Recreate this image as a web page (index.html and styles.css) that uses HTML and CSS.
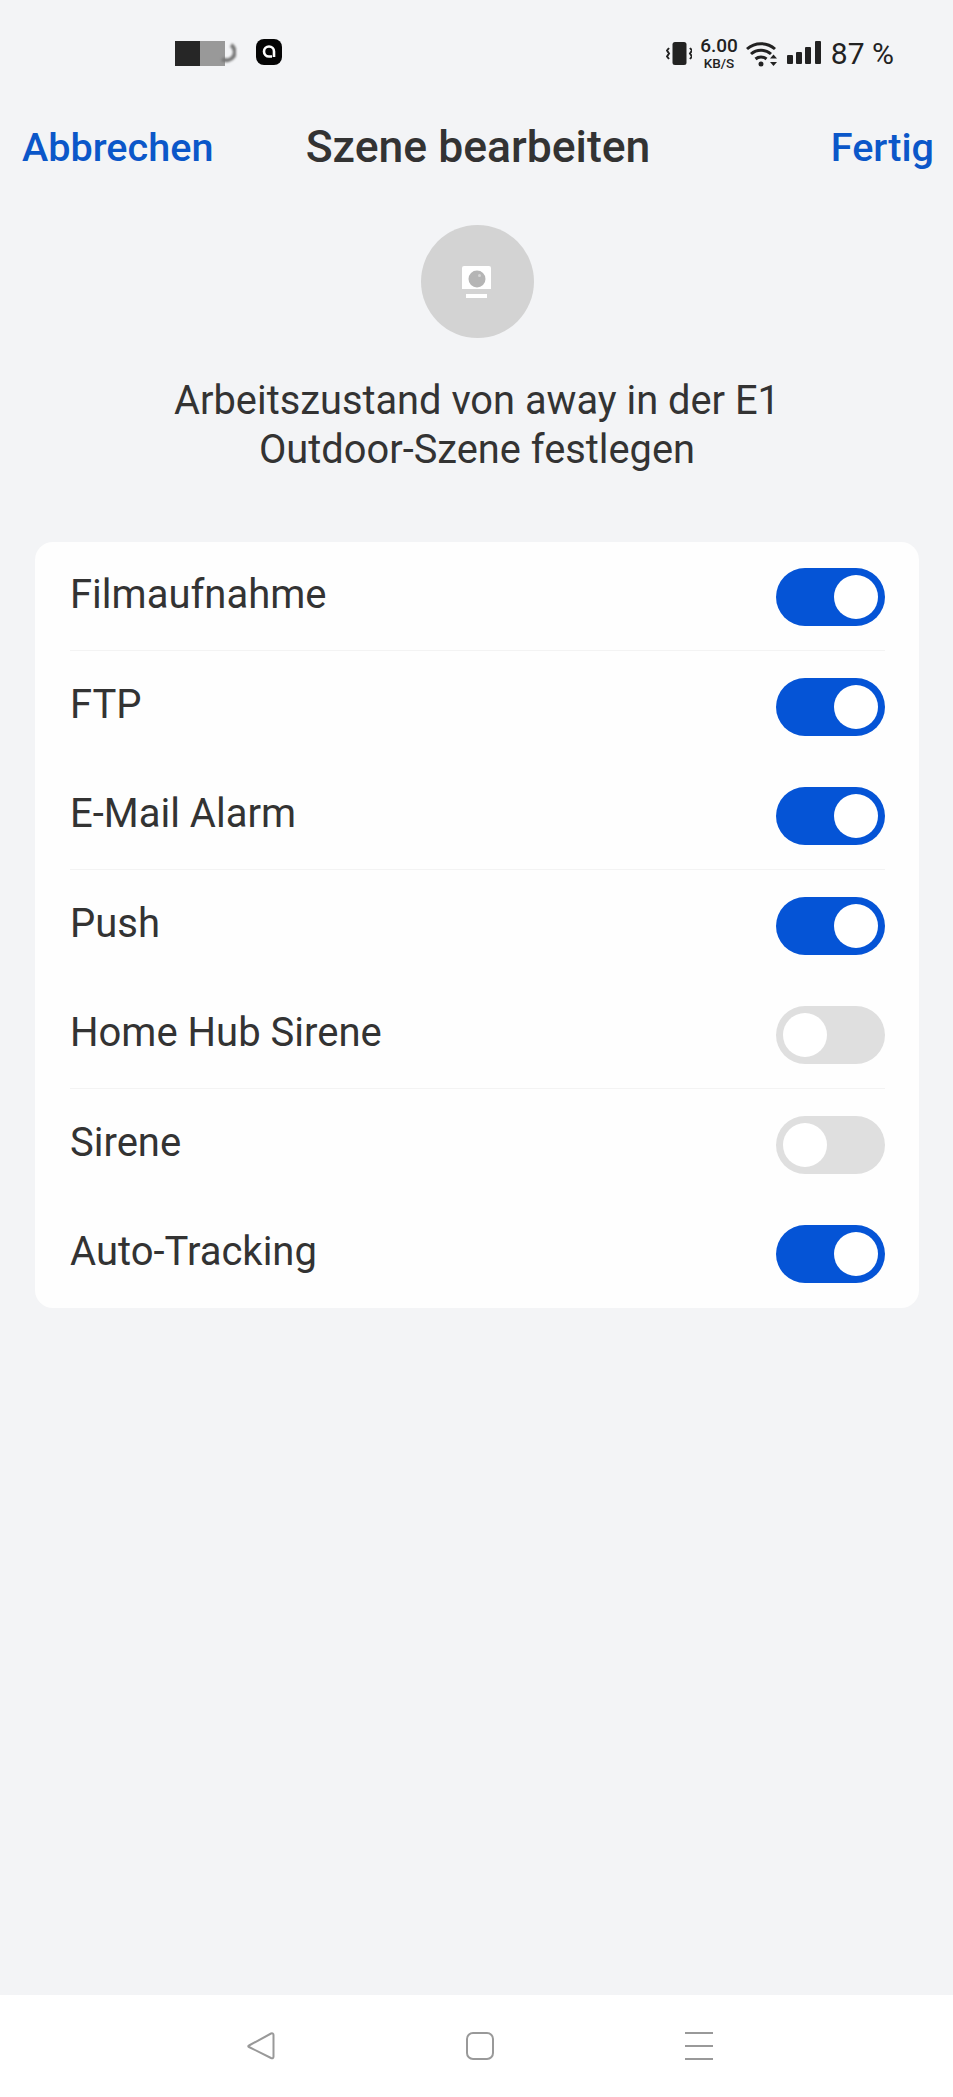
FILE: index.html
```html
<!DOCTYPE html>
<html lang="de">
<head>
    <meta charset="UTF-8">
    <meta name="viewport" content="width=device-width, initial-scale=1.0">
    <title>Szene bearbeiten</title>
    <link rel="stylesheet" href="styles.css">
</head>
<body>
    <div class="statusbar">
        <div class="status-left">
            <span class="blur-dark"></span>
            <span class="blur-grey"></span>
            <svg class="blur-ring" width="18" height="22" viewBox="0 0 18 22">
                <path d="M13 2a7.500 7.500 0 0 1-9 14" fill="none" stroke="#777" stroke-width="4"/>
            </svg>
            <svg class="app-icon" width="26" height="26" viewBox="0 0 26 26">
                <rect width="26" height="26" rx="8" fill="#050505"/>
                <path d="M18 18v-5.500a5 5 0 1 0-5 5h3" fill="none" stroke="#fff" stroke-width="2.600"/>
            </svg>
        </div>
        <div class="status-right">
            <svg width="26" height="26" viewBox="0 0 26 26">
                <rect x="6.500" y="2" width="14" height="23" rx="2.500" fill="#222"/>
                <path d="M3 8l-2 2.500 2 3-2 3 2 2.500M24 8l2 2.500-2 3 2 3-2 2.500" fill="none" stroke="#222" stroke-width="2"/>
            </svg>
            <div class="speed">
                <span class="speed-num">6.00</span>
                <span class="speed-unit">KB/S</span>
            </div>
            <svg width="33" height="27" viewBox="0 0 33 27">
                <path d="M1 9a21 21 0 0 1 28 0M5 14a15 15 0 0 1 20 0M9.500 19a8.500 8.500 0 0 1 11 0" fill="none" stroke="#222" stroke-width="3"/>
                <circle cx="15" cy="24" r="2.500" fill="#222"/>
                <path d="M27.500 14.500l3.500 4h-7zM27.500 26l3.500-4h-7z" fill="#222"/>
            </svg>
            <svg width="34" height="24" viewBox="0 0 34 24">
                <rect x="0" y="14" width="6" height="9" rx="1" fill="#222"/>
                <rect x="9" y="11" width="6" height="12" rx="1" fill="#222"/>
                <rect x="18" y="6" width="6" height="17" rx="1" fill="#222"/>
                <rect x="28" y="0" width="6" height="23" rx="1" fill="#222"/>
            </svg>
            <span class="battery">87 %</span>
        </div>
    </div>

    <header class="topbar">
        <a class="topbar-link">Abbrechen</a>
        <h1>Szene bearbeiten</h1>
        <a class="topbar-link topbar-done">Fertig</a>
    </header>

    <main>
        <div class="scene-icon">
            <svg width="30" height="32" viewBox="0 0 30 32">
                <path d="M2 0h25a2 2 0 0 1 2 2v21H0V2a2 2 0 0 1 2-2z" fill="#fff"/>
                <circle cx="15" cy="13" r="8.500" fill="#b5b5b5"/>
                <circle cx="17.500" cy="9.500" r="1.500" fill="#d5d5d5"/>
                <rect x="4" y="28" width="21" height="4" fill="#fff"/>
            </svg>
        </div>
        <p class="scene-text">Arbeitszustand von away in der E1<br>Outdoor-Szene festlegen</p>

        <ul class="settings">
            <li class="row"><span>Filmaufnahme</span><span class="toggle on"></span></li>
            <li class="row"><span>FTP</span><span class="toggle on"></span></li>
            <li class="row"><span>E-Mail Alarm</span><span class="toggle on"></span></li>
            <li class="row"><span>Push</span><span class="toggle on"></span></li>
            <li class="row"><span>Home Hub Sirene</span><span class="toggle"></span></li>
            <li class="row"><span>Sirene</span><span class="toggle"></span></li>
            <li class="row"><span>Auto-Tracking</span><span class="toggle on"></span></li>
        </ul>
    </main>

    <nav class="navbar">
        <svg width="30" height="30" viewBox="0 0 30 30">
            <path d="M3 14.500L25 2.500Q27.500 1.800 27.500 4V25.500Q27.500 28 25 27L3 16Q1.500 15.200 3 14.500z" fill="none" stroke="#999" stroke-width="2"/>
        </svg>
        <svg width="30" height="30" viewBox="0 0 30 30">
            <rect x="2" y="2" width="26" height="26" rx="6" fill="none" stroke="#999" stroke-width="2"/>
        </svg>
        <svg width="30" height="30" viewBox="0 0 30 30">
            <path d="M1 2h28M1 15h28M1 28h28" fill="none" stroke="#999" stroke-width="2"/>
        </svg>
    </nav>
</body>
</html>
```

FILE: styles.css
```css
body {
    font-family: Roboto, "Liberation Sans", sans-serif;
    margin: 0;
    padding: 0;
    background-color: #f3f4f6;
    color: #333;
    display: flex;
    flex-direction: column;
    min-height: 100vh;
}

/* Status bar */
.statusbar {
    height: 80px;
    display: flex;
    justify-content: space-between;
    align-items: center;
    padding: 26px 59px 0 175px;
    box-sizing: border-box;
}

.status-left {
    display: flex;
    align-items: center;
}

.blur-dark,
.blur-grey {
    width: 25px;
    height: 25px;
}

.blur-dark {
    background-color: #262626;
}

.blur-grey {
    background-color: #999;
}

.blur-ring {
    margin-left: -7px;
    margin-top: 2px;
    filter: blur(1px);
}

.app-icon {
    margin-left: 20px;
    margin-top: -2px;
}

.status-right {
    display: flex;
    align-items: center;
    gap: 8px;
    color: #222;
}

.speed {
    display: flex;
    flex-direction: column;
    align-items: center;
    font-weight: 500;
    line-height: 1;
}

.speed-num {
    font-size: 19px;
    line-height: 20px;
}

.speed-unit {
    font-size: 13.500px;
    line-height: 14px;
}

.battery {
    font-size: 30px;
    margin-left: 2px;
}

/* Top bar */
.topbar {
    display: grid;
    grid-template-columns: 1fr auto 1fr;
    align-items: center;
    padding: 0 19px 0 22px;
    height: 60px;
    margin-top: 37px;
}

.topbar h1 {
    margin: 0;
    font-size: 44.500px;
    font-weight: 500;
    color: #333;
}

.topbar-link {
    font-size: 39.600px;
    font-weight: 500;
    color: #0b57c9;
}

.topbar-done {
    text-align: right;
}

/* Main */
main {
    flex: 1;
    display: flex;
    flex-direction: column;
    align-items: center;
    padding: 48px 34px 0 35px;
}

.scene-icon {
    width: 113px;
    height: 113px;
    border-radius: 50%;
    background-color: #d3d3d3;
    display: flex;
    justify-content: center;
    align-items: center;
}

.scene-text {
    margin: 38px 0 0;
    font-size: 39.800px;
    line-height: 49px;
    text-align: center;
    color: #333;
}

.settings {
    list-style-type: none;
    margin: 68px 0 0;
    padding: 0 34px 0 35px;
    align-self: stretch;
    background-color: #fefefe;
    border-radius: 18px;
}

.row {
    height: 109.400px;
    box-sizing: border-box;
    display: flex;
    justify-content: space-between;
    align-items: center;
    font-size: 40px;
}

.row span:first-child {
    margin-top: -3px;
}

/* only every other row has a divider */
.row:nth-child(odd) {
    border-bottom: 1px solid #f3f3f3;
}

.row:last-child {
    border-bottom: none;
}

.toggle {
    width: 109px;
    height: 58px;
    margin-top: 2px;
    border-radius: 29px;
    background-color: #dfdfdf;
    display: flex;
    align-items: center;
    padding: 0 7px;
    box-sizing: border-box;
}

.toggle::after {
    content: "";
    width: 44px;
    height: 44px;
    border-radius: 50%;
    background-color: #fff;
}

.toggle.on {
    background-color: #0554d6;
    justify-content: flex-end;
}

/* Navigation bar */
.navbar {
    height: 102px;
    background-color: #fff;
    display: flex;
    justify-content: space-between;
    align-items: center;
    padding: 0 239px 0 246px;
    box-sizing: border-box;
}
```
